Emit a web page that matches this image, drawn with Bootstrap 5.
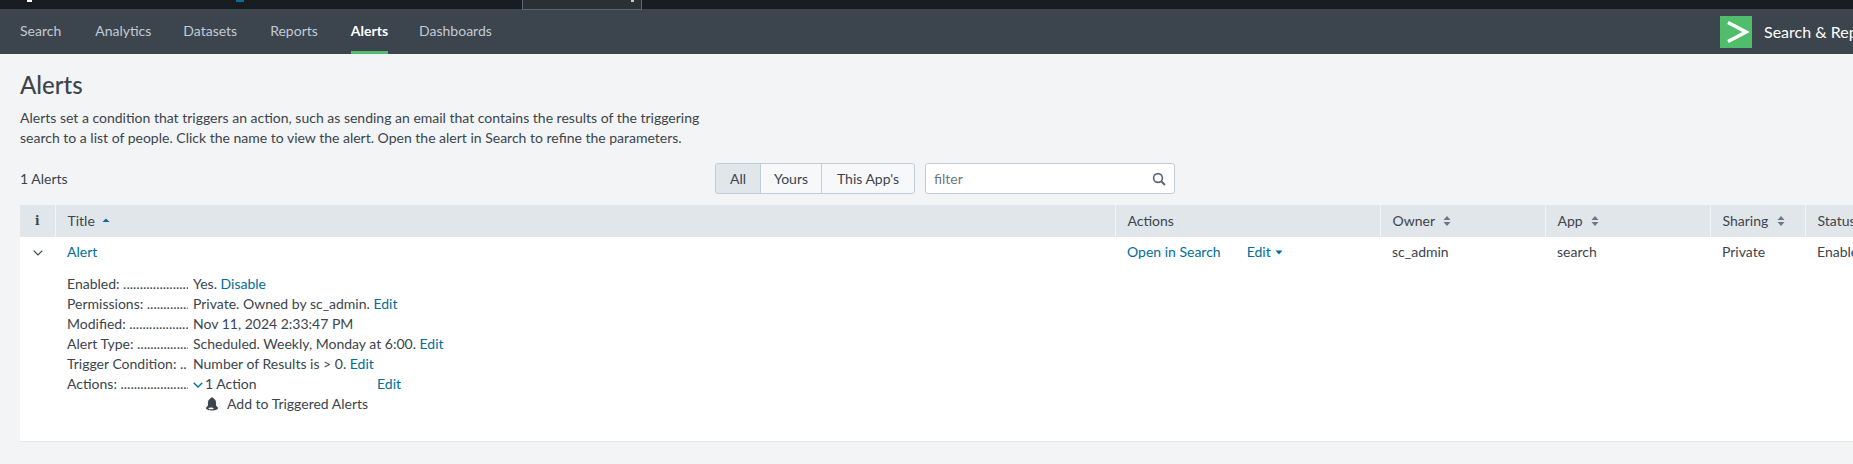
<!DOCTYPE html>
<html lang="en">
<head>
  <meta charset="UTF-8" />
  <title>Alerts</title>
  <link href="https://cdn.jsdelivr.net/npm/bootstrap@5.3.3/dist/css/bootstrap.min.css" rel="stylesheet" />
  <style>
    html, body { height:464px; overflow:hidden; }
    body { background:#f2f4f5; color:#3c444d; font:14px/20px Lato, "Liberation Sans", sans-serif; width:1853px; }
    a { color:#006d9c; text-decoration:none; }

    .top-strip { height:9px; background:#171d21; }
    .top-strip .speck-white { width:5px; height:2px; background:#fff; margin-left:27px; }
    .top-strip .speck-blue { width:8px; height:2px; background:#006d9c; margin-left:204px; }
    .top-strip .top-menu { width:120px; height:10px; margin-left:278px; background:#2b3033; border:1px solid #5c6773; border-top:0; }
    .top-strip .top-menu i { display:block; width:3px; height:2px; background:#c3cbd4; margin-left:108px; }

    .app-nav { height:45px; background:#3c444d; padding:0 0 0 20px; }
    .app-nav a { display:block; height:45px; line-height:44px; color:#c3cbd4; margin-right:33px; border-bottom:3px solid transparent; }
    .app-nav a:first-child { margin-right:34px; }
    .app-nav a:nth-child(2) { margin-right:32px; }
    .app-nav a.current { color:#fff; font-weight:700; border-bottom-color:#4fbd6b; margin-right:31px; }
    .app-title { margin-left:auto; width:133px; white-space:nowrap; overflow:visible; color:#fff; font-size:16px; }
    .app-title svg { flex:none; margin-right:12px; }

    .page-head { padding:16px 20px 0; }
    .page-head h1 { font-size:24px; line-height:30px; font-weight:500; margin:0 0 8px; color:#3c444d; }
    .page-head p { width:700px; margin:0; line-height:19.5px; }

    .tools { padding:16px 20px 11px; }
    .tools .count { width:695px; }
    .tools .btn { font-size:14px; line-height:21px; padding:4px 0; color:#3c444d; background:#f7f8fa; border-color:#c3cbd4; border-radius:3px; }
    .tools .btn.active { background:#e1e6eb; color:#3c444d; border-color:#c3cbd4; }
    .w-all { width:46px; } .w-yours { width:62px; } .w-app { width:94px; }
    .filter-box { width:250px; height:31px; margin-left:10px; background:#fff; border:1px solid #c3cbd4; border-radius:3px; padding-right:8px; }
    .filter-box input { border:0; outline:0; padding:0 8px; flex:1; min-width:0; font-size:14px; color:#3c444d; background:transparent; }
    .filter-box input::placeholder { color:#6b7785; opacity:1; }

    .table-wrap { margin-left:20px; width:1833px; overflow:hidden; background:#fff; border-bottom:1px solid #e1e6eb; height:237px; }
    .alerts-table { table-layout:fixed; width:1900px; margin:0; color:#3c444d; --bs-table-bg:transparent; font-size:14px; line-height:20px; }
    .alerts-table th { background:#e1e6eb; font-weight:400; height:32px; padding:6px 12px; border:0; border-left:1px solid #f2f4f5; white-space:nowrap; }
    .alerts-table th:first-child { border-left:0; text-align:center; padding:6px 0; font:700 12px/20px "DejaVu Serif", serif; }
    .alerts-table td { border:0; padding:5px 12px; vertical-align:top; background:transparent; }
    .alerts-table td:first-child { padding:5px 0 0 13px; }
    .sort-mark { margin-left:5px; vertical-align:-1px; }
    .sort-up { margin-left:4px; vertical-align:1px; }
    .edit-caret { margin-left:4px; vertical-align:2px; }
    .edit-link { margin-left:26px; }

    .detail-rows { margin-top:12px; }
    .detail-row { display:flex; height:20px; }
    .detail-row .lbl { width:121px; margin-right:5px; overflow:hidden; white-space:nowrap; flex:none; }
    .action-name { width:184px; }
    .trigger-line { margin-left:12px; }
    .trigger-line svg { margin-right:8px; vertical-align:-2px; }
    .action-chevron { margin-right:2px; vertical-align:1px; }
  </style>
</head>
<body>

  <div class="top-strip d-flex align-items-start">
    <div class="speck-white"></div>
    <div class="speck-blue"></div>
    <div class="top-menu"><i></i></div>
  </div>

  <nav class="app-nav d-flex align-items-start">
    <a href="#">Search</a>
    <a href="#">Analytics</a>
    <a href="#">Datasets</a>
    <a href="#">Reports</a>
    <a href="#" class="current">Alerts</a>
    <a href="#">Dashboards</a>
    <div class="app-title d-flex align-items-center h-100">
      <svg width="32" height="32" viewBox="0 0 32 32"><rect width="32" height="32" fill="#4fbd6b"/><path d="M8 6.5 L26 16 L8 25.5" fill="none" stroke="#fff" stroke-width="3.6"/></svg>
      <span>Search &amp; Reporting</span>
    </div>
  </nav>

  <div class="page-head">
    <h1>Alerts</h1>
    <p>Alerts set a condition that triggers an action, such as sending an email that contains the results of the triggering search to a list of people. Click the name to view the alert. Open the alert in Search to refine the parameters.</p>
  </div>

  <div class="tools d-flex align-items-center">
    <div class="count">1 Alerts</div>
    <div class="btn-group">
      <button class="btn active w-all">All</button>
      <button class="btn w-yours">Yours</button>
      <button class="btn w-app">This App's</button>
    </div>
    <div class="filter-box d-flex align-items-center">
      <input placeholder="filter" />
      <svg width="14" height="14" viewBox="0 0 14 14"><circle cx="6" cy="6" r="4.4" fill="none" stroke="#5c6773" stroke-width="1.6"/><path d="M9.2 9.2 L13 13" stroke="#5c6773" stroke-width="2"/></svg>
    </div>
  </div>

  <div class="table-wrap">
    <table class="table alerts-table">
      <colgroup>
        <col style="width:35px"><col style="width:1060px"><col style="width:265px"><col style="width:165px"><col style="width:165px"><col style="width:95px"><col style="width:115px">
      </colgroup>
      <thead>
        <tr>
          <th>i</th>
          <th>Title <svg class="sort-up" width="8" height="8" viewBox="0 0 8 8"><path d="M0.5 5 L4 1.5 L7.5 5 Z" fill="#006d9c"/></svg></th>
          <th>Actions</th>
          <th>Owner <svg class="sort-mark" width="8" height="12" viewBox="0 0 8 12"><path d="M0.5 5 L4 1 L7.5 5 Z M0.5 7 L4 11 L7.5 7 Z" fill="#6b7785"/></svg></th>
          <th>App <svg class="sort-mark" width="8" height="12" viewBox="0 0 8 12"><path d="M0.5 5 L4 1 L7.5 5 Z M0.5 7 L4 11 L7.5 7 Z" fill="#6b7785"/></svg></th>
          <th>Sharing <svg class="sort-mark" width="8" height="12" viewBox="0 0 8 12"><path d="M0.5 5 L4 1 L7.5 5 Z M0.5 7 L4 11 L7.5 7 Z" fill="#6b7785"/></svg></th>
          <th>Status</th>
        </tr>
      </thead>
      <tbody>
        <tr>
          <td><svg width="10" height="6" viewBox="0 0 10 6"><path d="M0.7 0.7 L5 5 L9.3 0.7" fill="none" stroke="#3c444d" stroke-width="1.2"/></svg></td>
          <td>
            <a href="#">Alert</a>
            <div class="detail-rows">
              <div class="detail-row"><div class="lbl">Enabled: .....................</div><div>Yes. <a href="#">Disable</a></div></div>
              <div class="detail-row"><div class="lbl">Permissions: ..............</div><div>Private. Owned by sc_admin. <a href="#">Edit</a></div></div>
              <div class="detail-row"><div class="lbl">Modified: .....................</div><div>Nov 11, 2024 2:33:47 PM</div></div>
              <div class="detail-row"><div class="lbl">Alert Type: .................</div><div>Scheduled. Weekly, Monday at 6:00. <a href="#">Edit</a></div></div>
              <div class="detail-row"><div class="lbl">Trigger Condition: ..</div><div>Number of Results is &gt; 0. <a href="#">Edit</a></div></div>
              <div class="detail-row"><div class="lbl">Actions: .......................</div><div class="action-name"><svg class="action-chevron" width="10" height="6" viewBox="0 0 10 6"><path d="M0.7 0.7 L5 5 L9.3 0.7" fill="none" stroke="#006d9c" stroke-width="1.3"/></svg>1 Action</div><a href="#">Edit</a></div>
              <div class="detail-row"><div class="lbl"></div><div class="trigger-line"><svg width="14" height="14" viewBox="0 0 14 14"><path d="M7 0.5 C8 0.5 8.6 1 8.8 1.8 C10.4 2.5 11 4 11 6 L11 8.5 L13.2 11 C13 12.6 10 13.5 7 13.5 C4 13.5 1 12.6 0.8 11 L3 8.5 L3 6 C3 4 3.6 2.5 5.2 1.8 C5.4 1 6 0.5 7 0.5 Z" fill="#3c444d"/><ellipse cx="6" cy="11.4" rx="2.6" ry="0.9" fill="#fff"/></svg>Add to Triggered Alerts</div></div>
            </div>
          </td>
          <td><a href="#">Open in Search</a><a href="#" class="edit-link">Edit<svg class="edit-caret" width="8" height="5" viewBox="0 0 8 5"><path d="M0.5 0.5 L7.5 0.5 L4 4.5 Z" fill="#006d9c"/></svg></a></td>
          <td>sc_admin</td>
          <td>search</td>
          <td>Private</td>
          <td>Enabled</td>
        </tr>
      </tbody>
    </table>
  </div>

</body>
</html>
